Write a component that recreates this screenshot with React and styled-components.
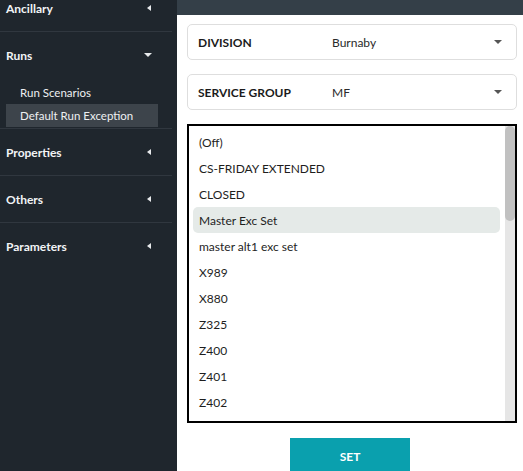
import React from "react";
import styled, { createGlobalStyle } from "styled-components";

const Global = createGlobalStyle`
  html, body, #root { margin: 0; padding: 0; height: 100%; }
  body { font-family: Lato, "Noto Sans", Arial, sans-serif; overflow: hidden; }
  * { box-sizing: border-box; }
`;

const Page = styled.div`
  display: flex;
  height: 100vh;
  width: 100%;
`;

const Sidebar = styled.nav`
  width: 177px;
  flex: none;
  background: #1f262d;
  overflow: hidden;
`;

const SideInner = styled.div`
  width: 172px;
  margin-top: -15px;
`;

const Section = styled.div`
  border-bottom: 1px solid #30373f;
  padding-bottom: ${(p) => (p.$open ? "1px" : "0")};
  &:last-child {
    border-bottom: none;
  }
`;

const SectionHead = styled.div`
  height: 46px;
  display: flex;
  align-items: center;
  justify-content: space-between;
  padding: 0 20px 0 6px;
  color: #f2f4f6;
  font-weight: 700;
  font-size: 12px;
`;

const CaretLeft = styled.span`
  width: 0;
  height: 0;
  border-top: 3.5px solid transparent;
  border-bottom: 3.5px solid transparent;
  border-right: 4px solid #e8eaec;
  margin-right: 1px;
`;

const CaretDown = styled.span`
  width: 0;
  height: 0;
  border-left: 4px solid transparent;
  border-right: 4px solid transparent;
  border-top: 4px solid #e8eaec;
`;

const SubList = styled.div`
  margin-top: 3px;
`;

const SubItem = styled.div`
  margin: 0 14px 0 6px;
  height: 23px;
  display: flex;
  align-items: center;
  padding-left: 14px;
  font-size: 11.5px;
  color: #eef0f2;
  background: ${(p) => (p.$active ? "#3d444b" : "transparent")};
`;

const Main = styled.main`
  flex: 1;
  display: flex;
  flex-direction: column;
  background: #fff;
`;

const TopBar = styled.div`
  height: 15px;
  background: #343f48;
  flex: none;
`;

const Content = styled.div`
  display: flex;
  flex-direction: column;
  padding: 9px 6px 0 10px;
`;

const Field = styled.div`
  height: 36px;
  border: 1px solid #dedede;
  border-radius: 5px;
  display: grid;
  grid-template-columns: 134px 1fr auto;
  align-items: center;
  padding: 0 14px 0 10px;
  margin-bottom: ${(p) => p.$mb || 0}px;
  font-size: 12px;
`;

const FieldLabel = styled.span`
  font-weight: 700;
  color: #1b1b1b;
`;

const FieldValue = styled.span`
  color: #2a2a2a;
`;

const SelectCaret = styled.span`
  width: 0;
  height: 0;
  border-left: 4px solid transparent;
  border-right: 4px solid transparent;
  border-top: 4px solid #555;
`;

const ListBox = styled.div`
  height: 299px;
  border: 2px solid #000;
  display: flex;
  overflow: hidden;
`;

const Items = styled.div`
  flex: 1;
  padding: 3px 5px 0 4px;
`;

const Item = styled.div`
  height: 26px;
  display: flex;
  align-items: center;
  padding-left: 6px;
  font-size: 12px;
  color: #1e1e1e;
  border-radius: 5px;
  background: ${(p) => (p.$selected ? "#e5eae8" : "transparent")};
`;

const Track = styled.div`
  width: 10px;
  flex: none;
  background: #e6e6e6;
`;

const Thumb = styled.div`
  height: 95px;
  background: #c1c1c1;
  border-radius: 5px;
`;

const Button = styled.button`
  align-self: center;
  margin-top: 15px;
  margin-left: -4px;
  width: 120px;
  height: 36px;
  border: none;
  background: #0aa0ae;
  color: #fff;
  font-family: inherit;
  font-weight: 700;
  font-size: 12px;
`;

const sections = [
  { name: "Ancillary" },
  { name: "Runs", open: true, items: ["Run Scenarios", "Default Run Exception"] },
  { name: "Properties" },
  { name: "Others" },
  { name: "Parameters" },
];

const options = [
  "(Off)",
  "CS-FRIDAY EXTENDED",
  "CLOSED",
  "Master Exc Set",
  "master alt1 exc set",
  "X989",
  "X880",
  "Z325",
  "Z400",
  "Z401",
  "Z402",
];

export default function App() {
  return (
    <>
      <Global />
      <Page>
        <Sidebar>
          <SideInner>
            {sections.map((s) => (
              <Section key={s.name} $open={s.open}>
                <SectionHead>
                  <span>{s.name}</span>
                  {s.open ? <CaretDown /> : <CaretLeft />}
                </SectionHead>
                {s.items && (
                  <SubList>
                    {s.items.map((it, i) => (
                      <SubItem key={it} $active={i === 1}>
                        {it}
                      </SubItem>
                    ))}
                  </SubList>
                )}
              </Section>
            ))}
          </SideInner>
        </Sidebar>
        <Main>
          <TopBar />
          <Content>
            <Field $mb={14}>
              <FieldLabel>DIVISION</FieldLabel>
              <FieldValue>Burnaby</FieldValue>
              <SelectCaret />
            </Field>
            <Field $mb={14}>
              <FieldLabel>SERVICE GROUP</FieldLabel>
              <FieldValue>MF</FieldValue>
              <SelectCaret />
            </Field>
            <ListBox>
              <Items>
                {options.map((o) => (
                  <Item key={o} $selected={o === "Master Exc Set"}>
                    {o}
                  </Item>
                ))}
              </Items>
              <Track>
                <Thumb />
              </Track>
            </ListBox>
            <Button>SET</Button>
          </Content>
        </Main>
      </Page>
    </>
  );
}
